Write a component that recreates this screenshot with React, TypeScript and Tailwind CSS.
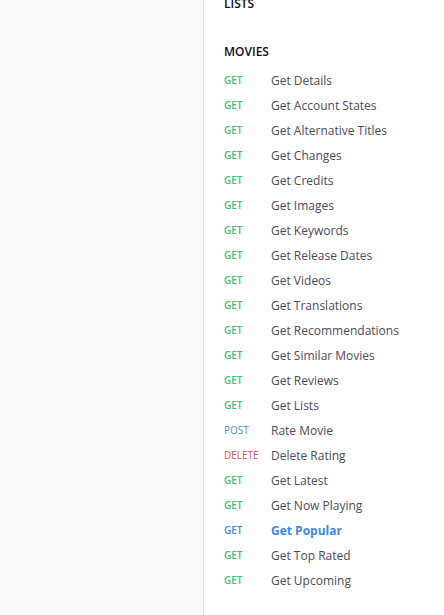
import React from 'react';

type Endpoint = {
  method: 'GET' | 'POST' | 'DELETE';
  title: string;
  active?: boolean;
};

const endpoints: Endpoint[] = [
  { method: 'GET', title: 'Get Details' },
  { method: 'GET', title: 'Get Account States' },
  { method: 'GET', title: 'Get Alternative Titles' },
  { method: 'GET', title: 'Get Changes' },
  { method: 'GET', title: 'Get Credits' },
  { method: 'GET', title: 'Get Images' },
  { method: 'GET', title: 'Get Keywords' },
  { method: 'GET', title: 'Get Release Dates' },
  { method: 'GET', title: 'Get Videos' },
  { method: 'GET', title: 'Get Translations' },
  { method: 'GET', title: 'Get Recommendations' },
  { method: 'GET', title: 'Get Similar Movies' },
  { method: 'GET', title: 'Get Reviews' },
  { method: 'GET', title: 'Get Lists' },
  { method: 'POST', title: 'Rate Movie' },
  { method: 'DELETE', title: 'Delete Rating' },
  { method: 'GET', title: 'Get Latest' },
  { method: 'GET', title: 'Get Now Playing' },
  { method: 'GET', title: 'Get Popular', active: true },
  { method: 'GET', title: 'Get Top Rated' },
  { method: 'GET', title: 'Get Upcoming' },
];

function methodClass(e: Endpoint) {
  if (e.active) return 'font-semibold text-[#3b86f0]';
  switch (e.method) {
    case 'POST':
      return 'font-normal text-[#4a8fd8]';
    case 'DELETE':
      return 'font-normal text-[#d2554f]';
    default:
      return 'font-semibold text-[#45bd77]';
  }
}

export default function App() {
  return (
    <div className="flex h-[615px] w-[444px] overflow-hidden bg-white font-['Open_Sans',sans-serif]">
      {/* Left gutter */}
      <div className="w-[204px] shrink-0 border-r border-[#dedede] bg-[#f9f9f9]" />

      {/* Sidebar list */}
      <div className="flex-1 pl-[20px]">
        <div className="-mt-[6px] text-[12px] font-semibold leading-[20px] text-[#0c0c24]">LISTS</div>

        <div className="mt-[28px] text-[12px] font-semibold leading-[20px] text-[#0c0c24]">MOVIES</div>

        <ul className="mt-[6px]">
          {endpoints.map((e) => (
            <li key={e.title} className="flex h-[25px] items-center">
              <span className={`w-[47px] shrink-0 text-[10px] ${methodClass(e)}`}>{e.method}</span>
              <span
                className={`text-[12px] ${
                  e.active ? 'font-bold text-[#3b86f0]' : 'text-[#4b4b5c]'
                }`}
              >
                {e.title}
              </span>
            </li>
          ))}
        </ul>
      </div>
    </div>
  );
}
